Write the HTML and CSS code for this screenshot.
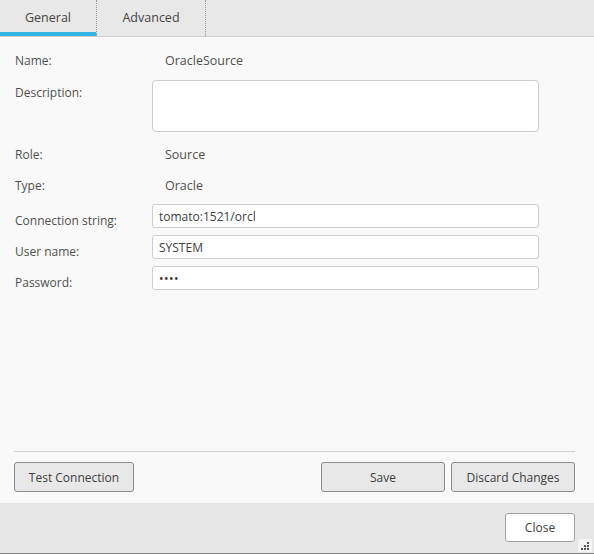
FILE: index.html
```html
<!DOCTYPE html>
<html>
<head>
<meta charset="utf-8">
<link rel="stylesheet" href="styles.css">
</head>
<body>
<div class="dialog">
  <div class="tabs">
    <div class="tab active">General</div>
    <div class="tab">Advanced</div>
  </div>
  <div class="content">
    <div class="form">
      <div class="row text"><span class="label">Name:</span><span class="value">OracleSource</span></div>
      <div class="row area"><span class="label">Description:</span><div class="textarea"></div></div>
      <div class="row text role"><span class="label">Role:</span><span class="value">Source</span></div>
      <div class="row text"><span class="label">Type:</span><span class="value">Oracle</span></div>
      <div class="row field first"><span class="label">Connection string:</span><div class="input">tomato:1521/orcl</div></div>
      <div class="row field"><span class="label">User name:</span><div class="input">SYSTEM</div></div>
      <div class="row field"><span class="label">Password:</span><div class="input pw">••••</div></div>
    </div>
    <div class="actions">
      <button class="btn test">Test Connection</button>
      <div class="right">
        <button class="btn save">Save</button>
        <button class="btn discard">Discard Changes</button>
      </div>
    </div>
  </div>
  <div class="footer">
    <button class="btn close">Close</button>
    <div class="grip">
      <svg width="10" height="10" viewBox="0 0 10 10"><g fill="#555"><rect x="7" y="1" width="2" height="2"/><rect x="4" y="4" width="2" height="2"/><rect x="7" y="4" width="2" height="2"/><rect x="1" y="7" width="2" height="2"/><rect x="4" y="7" width="2" height="2"/><rect x="7" y="7" width="2" height="2"/></g></svg>
    </div>
  </div>
</div>
</body>
</html>
```
FILE: styles.css
```css
* { box-sizing: border-box; }
html, body { margin: 0; padding: 0; }
body {
  width: 594px;
  height: 554px;
  font-family: "Open Sans", "Noto Sans", sans-serif;
  font-size: 12px;
  color: #505050;
  background: #f9f9f9;
}
.dialog {
  display: flex;
  flex-direction: column;
  height: 554px;
  border-bottom: 1px solid #8a8a8a;
}
.tabs {
  display: flex;
  height: 37px;
  background: #e8e8e8;
  border-bottom: 1px solid #cfcfcf;
}
.tab {
  height: 36px;
  padding-top: 9px;
  text-align: center;
  font-size: 12.5px;
  color: #444;
  border-right: 1px dotted #9a9a9a;
}
.tab:first-child { width: 97px; }
.tab:nth-child(2) { width: 109px; }
.tab.active { border-bottom: 4px solid #32b4e5; }
.content {
  flex: 1;
  display: flex;
  flex-direction: column;
  padding: 0 19px 0 14px;
  background: #f9f9f9;
}
.form { flex: 1; padding-top: 13px; }
.row { display: flex; }
.label { width: 138px; flex: none; padding-left: 1px; }
.row.text { height: 31px; align-items: flex-start; padding-top: 2px; }
.row.text .value { padding-left: 13px; color: #505050; font-size: 12.5px; }
.row.area { height: 52px; margin-top: -1px; }
.row.area .label { padding-top: 4px; }
.textarea {
  width: 387px;
  height: 52px;
  background: #fff;
  border: 1px solid #cdcdcd;
  border-radius: 4px;
}
.row.role { margin-top: 12px; }
.row.field { height: 24px; margin-bottom: 7px; align-items: center; }
.row.field.first { margin-top: -2px; }
.row.field .label { padding-top: 8px; }
.input {
  width: 387px;
  height: 24px;
  background: #fff;
  border: 1px solid #cdcdcd;
  border-radius: 3px;
  padding: 3px 6px 0;
  font-size: 12px;
  color: #404040;
}
.input.pw { font-size: 12px; padding-top: 3px; letter-spacing: 0.5px; color: #333; }
.actions {
  border-top: 1px solid #d2d2d2;
  padding: 10px 0 11px;
  display: flex;
  justify-content: space-between;
}
.right { display: flex; gap: 6px; }
.btn {
  font-family: "Open Sans", "Noto Sans", sans-serif;
  font-size: 12px;
  color: #404040;
  height: 30px;
  background: #e8e8e8;
  border: 1px solid #8c8c8c;
  border-radius: 3px;
  padding: 0;
}
.btn.test { width: 120px; }
.btn.save { width: 124px; }
.btn.discard { width: 124px; }
.footer {
  height: 50px;
  background: #e6e6e6;
  position: relative;
  display: flex;
  justify-content: flex-end;
  padding: 10px 19px 0 0;
}
.btn.close {
  width: 70px;
  height: 29px;
  background: #fff;
  border-color: #a0a0a0;
}
.grip {
  position: absolute;
  right: 2px;
  bottom: 1px;
  width: 14px;
  height: 13px;
  background: #f4f4f4;
  border-radius: 3px 0 0 0;
  display: flex;
  align-items: flex-end;
  justify-content: flex-end;
  padding: 0 2px 1px 0;
}
```
